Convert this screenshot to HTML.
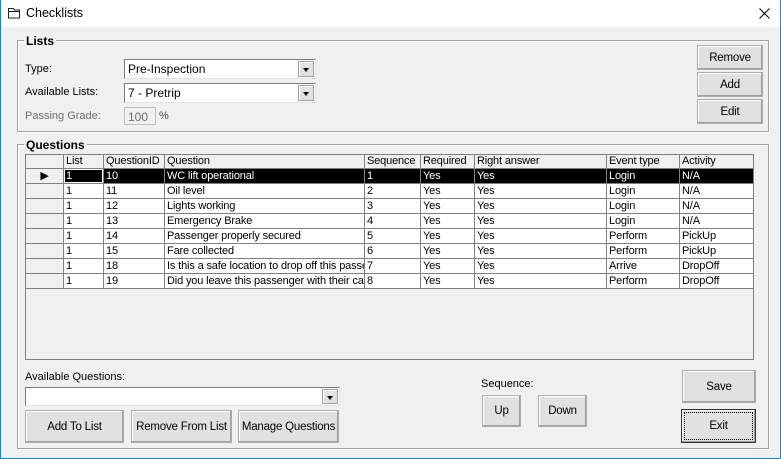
<!DOCTYPE html>
<html><head><style>
*{box-sizing:border-box;margin:0;padding:0}
body{width:781px;height:459px;overflow:hidden;background:#f0f0f0;font-family:"Liberation Sans",sans-serif;font-size:11px;color:#000;position:relative}
.a{position:absolute}
.win{left:0;top:0;width:781px;height:459px;border:1px solid #1883d7;border-top:none}
.title{left:1px;top:0;width:779px;height:27px;background:#fff}
.grp{border:1px solid #a0a0a0;box-shadow:inset 1px 1px 0 #fff,1px 1px 0 #fff}
.gl{background:#f0f0f0;font-weight:bold;font-size:12px;padding:0 2px}
.btn{background:#e1e1e1;border:1px solid #adadad;box-shadow:inset -1px -1px 0 #a0a0a0,inset 1px 1px 0 #fff;display:flex;align-items:center;justify-content:center;font-size:11.5px;letter-spacing:-0.2px}
.cb{background:#fff;border:1px solid #7a7a7a;border-right-color:#e3e3e3;border-bottom-color:#e3e3e3;padding:2px 3px;font-size:12px}
.dd{position:absolute;right:1px;top:1px;bottom:1px;width:16px;background:#e1e1e1;border:1px solid #a0a0a0;box-shadow:inset 1px 1px 0 #fff}
.dd:after{content:"";position:absolute;left:4px;top:6px;border-left:3.5px solid transparent;border-right:3.5px solid transparent;border-top:4px solid #000}
table{border-collapse:collapse;table-layout:fixed;font-size:11px;letter-spacing:-0.15px}
td{border:1px solid #808080;height:15px;padding:0 2px;white-space:nowrap;overflow:hidden;background:#fff;line-height:13px}
tr.h td{background:#f0f0f0;height:14px}
td.rh{background:#f0f0f0}
tr.s td{background:#000;color:#fff}
tr.s td.rh{background:#f0f0f0;color:#000}
</style></head><body>
<div class="a win"></div>
<div class="a title"></div>
<svg class="a" style="left:7px;top:7px" width="14" height="12"><path d="M1.5 1.5h5l1 1.5h5v8h-11z M1.5 4.5h11" fill="none" stroke="#222"/></svg>
<div class="a" style="left:26px;top:6px;font-size:12.5px">Checklists</div>
<svg class="a" style="left:759px;top:8px" width="11" height="11"><path d="M0.5 0.5l10 10M10.5 0.5l-10 10" stroke="#000" stroke-width="1"/></svg>

<div class="a grp" style="left:17px;top:40px;width:752px;height:92px"></div>
<div class="a gl" style="left:24px;top:34px">Lists</div>
<div class="a" style="left:25px;top:63px">Type:</div>
<div class="a" style="left:25px;top:86px">Available Lists:</div>
<div class="a" style="left:25px;top:110px;color:#6d6d6d">Passing Grade:</div>
<div class="a cb" style="left:124px;top:59px;width:192px;height:20px">Pre-Inspection<div class="dd"></div></div>
<div class="a cb" style="left:124px;top:83px;width:192px;height:20px">7 - Pretrip<div class="dd"></div></div>
<div class="a" style="left:124px;top:107px;width:32px;height:18px;border:1px solid #c0c0c0;background:#f0f0f0;color:#6d6d6d;padding:2px 3px;font-size:12px">100</div>
<div class="a" style="left:159px;top:110px;color:#444">%</div>
<div class="a btn" style="left:697px;top:45px;width:66px;height:25px">Remove</div>
<div class="a btn" style="left:697px;top:72px;width:66px;height:25px">Add</div>
<div class="a btn" style="left:697px;top:99px;width:66px;height:25px">Edit</div>

<div class="a grp" style="left:17px;top:144px;width:752px;height:305px"></div>
<div class="a gl" style="left:24px;top:138px">Questions</div>
<div class="a" style="left:25px;top:154px;width:729px;height:206px;background:#f0f0f0;border:1px solid #808080"></div>
<table class="a" style="left:25px;top:154px;width:728px">
<colgroup><col style="width:38px"><col style="width:40px"><col style="width:61px"><col style="width:200px"><col style="width:56px"><col style="width:54px"><col style="width:132px"><col style="width:73px"><col style="width:74px"></colgroup>
<tr class="h"><td class="rh"></td><td>List</td><td>QuestionID</td><td>Question</td><td>Sequence</td><td>Required</td><td>Right answer</td><td>Event type</td><td>Activity</td></tr>
<tr class="s"><td class="rh" style="text-align:center;font-size:11px">&#9654;</td><td style="box-shadow:inset 0 0 0 1px #fff">1</td><td>10</td><td>WC lift operational</td><td>1</td><td>Yes</td><td>Yes</td><td>Login</td><td>N/A</td></tr>
<tr><td class="rh"></td><td>1</td><td>11</td><td>Oil level</td><td>2</td><td>Yes</td><td>Yes</td><td>Login</td><td>N/A</td></tr>
<tr><td class="rh"></td><td>1</td><td>12</td><td>Lights working</td><td>3</td><td>Yes</td><td>Yes</td><td>Login</td><td>N/A</td></tr>
<tr><td class="rh"></td><td>1</td><td>13</td><td>Emergency Brake</td><td>4</td><td>Yes</td><td>Yes</td><td>Login</td><td>N/A</td></tr>
<tr><td class="rh"></td><td>1</td><td>14</td><td>Passenger properly secured</td><td>5</td><td>Yes</td><td>Yes</td><td>Perform</td><td>PickUp</td></tr>
<tr><td class="rh"></td><td>1</td><td>15</td><td>Fare collected</td><td>6</td><td>Yes</td><td>Yes</td><td>Perform</td><td>PickUp</td></tr>
<tr><td class="rh"></td><td>1</td><td>18</td><td>Is this a safe location to drop off this passenger?</td><td>7</td><td>Yes</td><td>Yes</td><td>Arrive</td><td>DropOff</td></tr>
<tr><td class="rh"></td><td>1</td><td>19</td><td>Did you leave this passenger with their caregiver?</td><td>8</td><td>Yes</td><td>Yes</td><td>Perform</td><td>DropOff</td></tr>
</table>

<div class="a" style="left:25px;top:371px">Available Questions:</div>
<div class="a cb" style="left:25px;top:387px;width:315px;height:19px"><div class="dd"></div></div>
<div class="a btn" style="left:25px;top:410px;width:99px;height:33px">Add To List</div>
<div class="a btn" style="left:131px;top:410px;width:101px;height:33px">Remove From List</div>
<div class="a btn" style="left:238px;top:410px;width:101px;height:33px">Manage Questions</div>
<div class="a" style="left:481px;top:378px">Sequence:</div>
<div class="a btn" style="left:482px;top:395px;width:39px;height:32px">Up</div>
<div class="a btn" style="left:538px;top:395px;width:49px;height:32px">Down</div>
<div class="a btn" style="left:682px;top:370px;width:74px;height:33px">Save</div>
<div class="a btn" style="left:681px;top:409px;width:75px;height:34px;border:1px solid #333"><span style="outline:1px dotted #000;position:absolute;left:3px;top:3px;right:3px;bottom:3px"></span>Exit</div>
</body></html>
